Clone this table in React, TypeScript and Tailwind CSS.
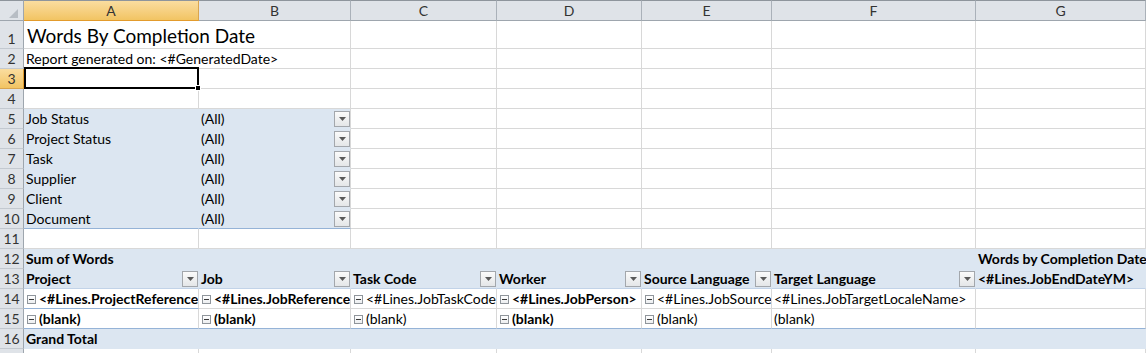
import React, { ReactNode } from "react";
import { twMerge } from "tailwind-merge";

type Spec = { c?: ReactNode; k?: string };

const P = "bg-[#dce6f1] border-[#dce6f1]";
const BLUE_B = "border-b-[#95b3d7]";

function Drop() {
  return (
    <span className="ml-auto -mr-[2px] mb-[1px] flex h-[16px] w-[16px] shrink-0 items-center justify-center border border-[#a3a7ac] bg-gradient-to-b from-[#fbfbfb] to-[#e4e6e8]">
      <svg width="7" height="4" viewBox="0 0 7 4">
        <path d="M0 0h7L3.5 4z" fill="#5a5a5a" />
      </svg>
    </span>
  );
}

function Minus() {
  return (
    <span className="mr-[3px] ml-[1px] flex h-[9px] w-[9px] shrink-0 items-center justify-center border border-[#8f959b] bg-gradient-to-b from-white to-[#eceef0]">
      <span className="h-[1px] w-[5px] bg-[#3a3a3a]" />
    </span>
  );
}

function Line({ minus, bold, text }: { minus?: boolean; bold?: boolean; text: string }) {
  return (
    <span className="flex items-center">
      {minus && <Minus />}
      <span className={bold ? "font-bold" : ""}>{text}</span>
    </span>
  );
}

function HeadCell({ children, sel }: { children: ReactNode; sel?: boolean }) {
  return (
    <div
      className={twMerge(
        "flex h-[21px] items-center justify-center border-t border-r border-b border-t-[#8e959c] border-r-[#aab1b9] border-b-[#9ea6ae] bg-[#dfe3e8] text-[14px] leading-[19px] text-[#333]",
        sel ? "bg-gradient-to-b from-[#fadd9f] to-[#f2c462] border-b-[#e39b2c] border-r-[#d9a54f]" : ""
      )}
    >
      {children}
    </div>
  );
}

function Row({ n, h, sel, cells }: { n: number; h: string; sel?: boolean; cells: Spec[] }) {
  const all: Spec[] = [...cells];
  while (all.length < 7) all.push({});
  return (
    <>
      <div
        className={twMerge(
          "flex items-end justify-center border-r border-b border-r-[#9ea6ae] border-b-[#c3c9d0] bg-[#dfe3e8] text-[14px] leading-[19px] text-[#333]",
          h,
          sel ? "bg-gradient-to-b from-[#fadd9f] to-[#f2c462] border-r-[#e39b2c] border-b-[#d9a54f]" : ""
        )}
      >
        {n}
      </div>
      {all.map((s, i) => (
        <div
          key={i}
          className={twMerge(
            "relative flex items-end whitespace-nowrap border-r border-b border-[#d8d8d8] px-[2px] text-[14px] leading-[18px] text-black",
            h,
            s.k
          )}
        >
          {s.c}
        </div>
      ))}
    </>
  );
}

export default function App() {
  const filters = ["Job Status", "Project Status", "Task", "Supplier", "Client", "Document"];
  const headers = ["Project", "Job", "Task Code", "Worker", "Source Language", "Target Language"];
  return (
    <div className="h-[353px] w-[1146px] overflow-hidden bg-white font-['Lato','Liberation_Sans',sans-serif]">
      <div className="grid grid-cols-[24px_175px_152px_146px_145px_130px_204px_170px]">
        <div className="flex h-[21px] items-end justify-end border-t border-r border-b border-t-[#8e959c] border-r-[#9ea6ae] border-b-[#9ea6ae] bg-[#dfe3e8] pr-[5px] pb-[2px]">
          <svg width="9" height="9" viewBox="0 0 9 9">
            <path d="M9 0V9H0z" fill="#b7bdc4" />
          </svg>
        </div>
        <HeadCell sel>A</HeadCell>
        <HeadCell>B</HeadCell>
        <HeadCell>C</HeadCell>
        <HeadCell>D</HeadCell>
        <HeadCell>E</HeadCell>
        <HeadCell>F</HeadCell>
        <HeadCell>G</HeadCell>

        <Row
          n={1}
          h="h-[28px]"
          cells={[
            {
              c: <span className="text-[19px] leading-[24px]">Words By Completion Date</span>,
              k: "border-r-transparent pl-[3px]",
            },
          ]}
        />
        <Row
          n={2}
          h="h-[20px]"
          cells={[{ c: "Report generated on: <#GeneratedDate>", k: "border-r-transparent" }]}
        />
        <Row
          n={3}
          h="h-[20px]"
          sel
          cells={[
            {
              c: (
                <>
                  <div className="absolute -top-[2px] left-0 -right-[1px] -bottom-[1px] z-10 border-2 border-black" />
                  <div className="absolute -right-[3px] -bottom-[3px] z-20 h-[6px] w-[6px] border border-white bg-black" />
                </>
              ),
            },
          ]}
        />
        <Row n={4} h="h-[20px]" cells={[]} />
        {filters.map((f, i) => (
          <Row
            key={f}
            n={5 + i}
            h="h-[20px]"
            cells={[
              { c: f, k: twMerge(P, i === 5 ? BLUE_B : "") },
              {
                c: (
                  <>
                    <span>(All)</span>
                    <Drop />
                  </>
                ),
                k: twMerge("bg-[#dce6f1] border-b-[#dce6f1]", i === 5 ? BLUE_B : ""),
              },
            ]}
          />
        ))}
        <Row n={11} h="h-[20px]" cells={[]} />
        <Row
          n={12}
          h="h-[20px]"
          cells={[
            { c: <span className="font-bold">Sum of Words</span>, k: P },
            { k: P },
            { k: P },
            { k: P },
            { k: P },
            { k: P },
            { c: <span className="font-bold">Words by Completion Date</span>, k: P },
          ]}
        />
        <Row
          n={13}
          h="h-[20px]"
          cells={[
            ...headers.map((t) => ({
              c: (
                <>
                  <span className="font-bold">{t}</span>
                  <Drop />
                </>
              ),
              k: twMerge(P, "border-b-[#c2d3e8]"),
            })),
            { c: <span className="font-bold">{"<#Lines.JobEndDateYM>"}</span>, k: twMerge(P, "border-b-[#c2d3e8]") },
          ]}
        />
        <Row
          n={14}
          h="h-[20px]"
          cells={[
            { c: <Line minus bold text="<#Lines.ProjectReference>" />, k: twMerge("overflow-hidden", BLUE_B) },
            { c: <Line minus bold text="<#Lines.JobReference>" />, k: "overflow-hidden" },
            { c: <Line minus text="<#Lines.JobTaskCode>" />, k: "overflow-hidden" },
            { c: <Line minus bold text="<#Lines.JobPerson>" />, k: "overflow-hidden" },
            { c: <Line minus text="<#Lines.JobSourceLocaleName>" />, k: "overflow-hidden" },
            { c: <Line text="<#Lines.JobTargetLocaleName>" />, k: "overflow-hidden" },
            {},
          ]}
        />
        <Row
          n={15}
          h="h-[20px]"
          cells={[
            { c: <Line minus bold text="(blank)" />, k: BLUE_B },
            { c: <Line minus bold text="(blank)" />, k: BLUE_B },
            { c: <Line minus text="(blank)" />, k: BLUE_B },
            { c: <Line minus bold text="(blank)" />, k: BLUE_B },
            { c: <Line minus text="(blank)" />, k: BLUE_B },
            { c: <Line text="(blank)" />, k: BLUE_B },
            { k: BLUE_B },
          ]}
        />
        <Row
          n={16}
          h="h-[20px]"
          cells={[
            { c: <span className="font-bold">Grand Total</span>, k: P },
            { k: P },
            { k: P },
            { k: P },
            { k: P },
            { k: P },
            { k: P },
          ]}
        />
        <Row n={17} h="h-[20px]" cells={[]} />
      </div>
    </div>
  );
}
